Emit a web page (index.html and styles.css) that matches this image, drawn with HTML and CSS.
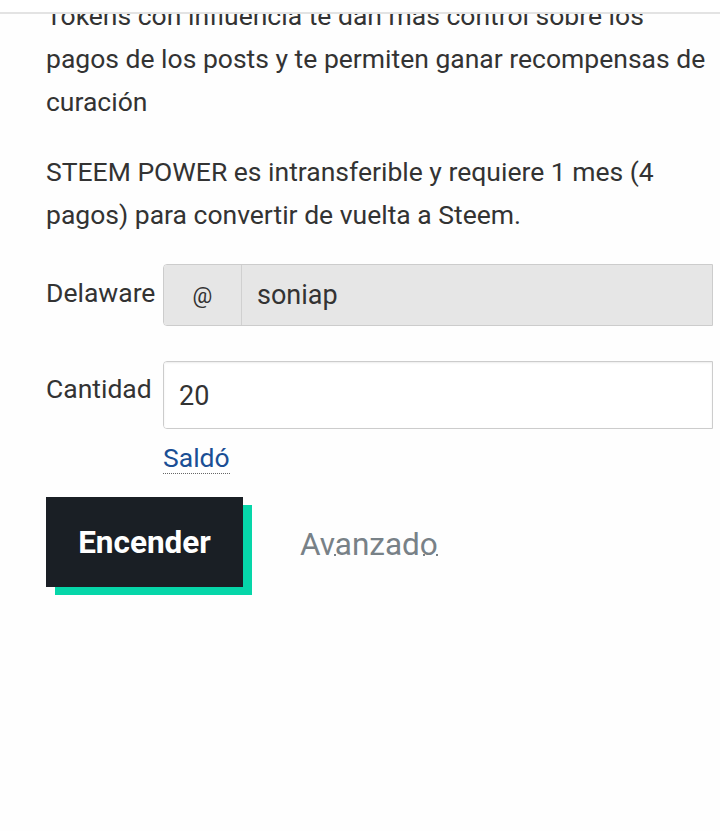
FILE: index.html
```html
<!DOCTYPE html>
<html lang="es">
<head>
<meta charset="utf-8">
<title>Encender</title>
<link rel="stylesheet" href="styles.css">
</head>
<body>
<div class="topbar"></div>
<div class="viewport">
  <div class="content">
    <p class="text">Tokens con influencia te dan más control sobre los pagos de los posts y te permiten ganar recompensas de curación</p>
    <p class="text">STEEM POWER es intransferible y requiere 1 mes (4 pagos) para convertir de vuelta a Steem.</p>

    <div class="row row-from">
      <label class="label">Delaware</label>
      <div class="group">
        <span class="addon">@</span>
        <span class="field field-disabled">soniap</span>
      </div>
    </div>

    <div class="row row-amount">
      <label class="label">Cantidad</label>
      <div class="group">
        <span class="field field-amount">20</span>
      </div>
    </div>

    <div class="balance-row">
      <a class="balance">Saldó</a>
    </div>

    <div class="actions">
      <button class="btn">Encender</button>
      <a class="advanced">Avanzado</a>
    </div>
  </div>
</div>
</body>
</html>
```
FILE: styles.css
```css
html, body {
  margin: 0;
  padding: 0;
  background: #fefefe;
  font-family: Roboto, "Liberation Sans", sans-serif;
  color: #333333;
}

.topbar {
  height: 12px;
  background: #ffffff;
  border-bottom: 2px solid #e3e3e3;
  position: relative;
  z-index: 2;
}

.viewport {
  height: 817px;
  overflow: hidden;
}

.content {
  margin-top: -20px;
  padding-left: 46px;
}

.text {
  margin: 0 0 27px 0;
  font-size: 26.5px;
  line-height: 43px;
  width: 668px;
}

.row {
  display: flex;
  align-items: flex-start;
}

.row-from {
  margin-top: 28px;
}

.row-amount {
  margin-top: 35px;
}

.label {
  width: 117px;
  flex: none;
  font-size: 26.5px;
  line-height: 30px;
}

.row-from .label {
  padding-top: 14px;
}

.row-amount .label {
  padding-top: 13px;
}

.group {
  display: flex;
  width: 548px;
  border: 1px solid #cccccc;
  border-radius: 4px 0 0 4px;
  overflow: hidden;
}

.row-from .group {
  height: 60px;
}

.row-amount .group {
  height: 66px;
}

.addon {
  width: 77px;
  flex: none;
  background: #e6e6e6;
  border-right: 1px solid #d0d0d0;
  display: flex;
  align-items: center;
  justify-content: center;
  font-size: 22px;
  color: #333333;
}

.field {
  flex: 1;
  display: flex;
  align-items: center;
  padding-left: 15px;
  font-size: 27px;
  color: #333333;
}

.field-disabled {
  background: #e6e6e6;
}

.field-amount {
  background: #ffffff;
  box-shadow: inset 0 1px 2px rgba(0, 0, 0, 0.08);
  padding-top: 2px;
}

.balance-row {
  padding-left: 117px;
  margin-top: 14px;
}

.balance {
  font-size: 26.5px;
  line-height: 30px;
  color: #1a4f95;
  border-bottom: 1px dotted #666666;
  display: inline-block;
}

.actions {
  display: flex;
  align-items: center;
  margin-top: 23px;
}

.btn {
  width: 197px;
  height: 90px;
  background: #1a1f25;
  color: #ffffff;
  border: none;
  border-radius: 0;
  font-family: Roboto, "Liberation Sans", sans-serif;
  font-weight: 700;
  font-size: 31.5px;
  box-shadow: 9px 8px 0 #06d6a9;
  padding: 0;
}

.advanced {
  margin-left: 57px;
  margin-top: 5px;
  font-size: 31.5px;
  line-height: 38px;
  color: #788187;
  background-image:
    linear-gradient(#788187, #788187),
    linear-gradient(#788187, #788187),
    linear-gradient(#788187, #788187);
  background-size: 2px 2px, 2px 2px, 2px 2px;
  background-repeat: no-repeat;
  background-position: 34px calc(100% - 8px), 123px calc(100% - 8px), 136px calc(100% - 8px);
}
```
